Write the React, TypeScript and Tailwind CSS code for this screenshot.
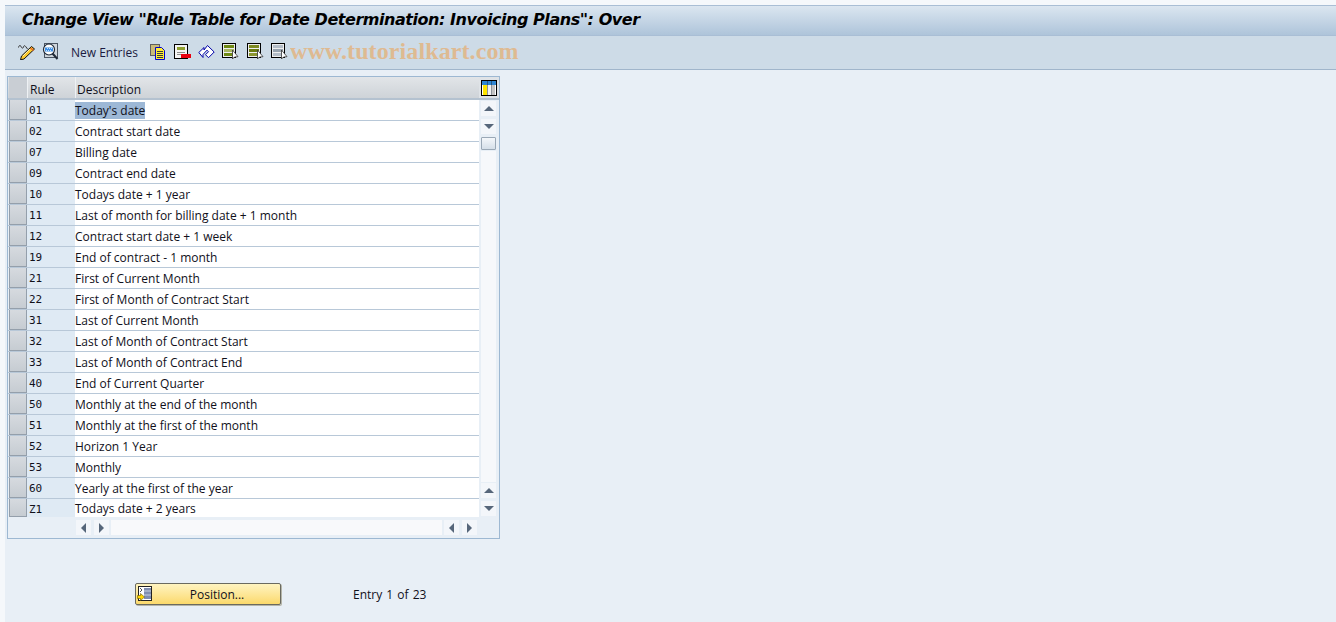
const rows = [
  ["01", "Today's date"],
  ["02", "Contract start date"],
  ["07", "Billing date"],
  ["09", "Contract end date"],
  ["10", "Todays date + 1 year"],
  ["11", "Last of month for billing date + 1 month"],
  ["12", "Contract start date + 1 week"],
  ["19", "End of contract - 1 month"],
  ["21", "First of Current Month"],
  ["22", "First of Month of Contract Start"],
  ["31", "Last of Current Month"],
  ["32", "Last of Month of Contract Start"],
  ["33", "Last of Month of Contract End"],
  ["40", "End of Current Quarter"],
  ["50", "Monthly at the end of the month"],
  ["51", "Monthly at the first of the month"],
  ["52", "Horizon 1 Year"],
  ["53", "Monthly"],
  ["60", "Yearly at the first of the year"],
  ["Z1", "Todays date + 2 years"],
];

function PencilIcon() {
  return (
    <svg width="17" height="16" viewBox="0 0 17 16">
      <path d="M0.5 3.5C1 1 2.5 1 3 2.5S5 5 5.5 3 7 1.5 8 3l1.5 2" fill="none" stroke="#333" strokeWidth="1" />
      <path d="M13.5 2.5l3 2.5L6 15l-3.5 .8L3.5 12z" fill="#fbc92f" stroke="#111" strokeWidth="1" />
      <path d="M12.5 4l3 2.5" stroke="#e8672a" strokeWidth="1.5" />
      <path d="M5 12l7-7" stroke="#fff3b0" strokeWidth="1" />
    </svg>
  );
}

function GlassesIcon() {
  return (
    <svg width="17" height="17" viewBox="0 0 17 17">
      <rect x="2.5" y="0.5" width="13" height="14" fill="#cfd6dc" stroke="#4b5563" />
      <circle cx="7" cy="6.5" r="5.5" fill="#fff" stroke="#1f2937" strokeWidth="1.2" />
      <path d="M3 4.5h8v4H3z" fill="#3d8fe6" />
      <path d="M5 5.5h1M7 5.5h1M9 5.5h1M4 7.5h1M6 7.5h1M8 7.5h1" stroke="#bfe0fb" />
      <path d="M10.5 10.5l5 5.5" stroke="#1f2937" strokeWidth="2" />
    </svg>
  );
}

function CopyIcon() {
  return (
    <svg width="16" height="16" viewBox="0 0 16 16">
      <rect x="0.5" y="0.5" width="9" height="11" fill="#c9bb78" stroke="#5f5f5f" />
      <path d="M5.5 3.5h6l3 3v9h-9z" fill="#ffee33" stroke="#0000d0" />
      <path d="M7 7.5h6M7 9.5h6M7 11.5h6M7 13.5h6" stroke="#3a3a3a" />
    </svg>
  );
}

function DeleteIcon() {
  return (
    <svg width="17" height="16" viewBox="0 0 17 16">
      <rect x="0.5" y="0.5" width="13" height="14" fill="#f4f4f4" stroke="#000" />
      <rect x="3" y="3" width="8" height="3" fill="#8fa030" />
      <rect x="3" y="8" width="8" height="1" fill="#8d8d8d" />
      <rect x="3" y="10" width="4" height="1" fill="#8d8d8d" />
      <rect x="7" y="10" width="10" height="4" fill="#e8000f" />
    </svg>
  );
}

function UndoIcon() {
  return (
    <svg width="17" height="15" viewBox="0 0 17 15">
      <path d="M0.8 8.5L6 3.5v2.5l3.5-4.5 6.7 6.5-5.7 5.7-3-3 3-3-1.5-1.5L5 10.5v3z" fill="#fff" stroke="#0000a8" strokeWidth="1" />
    </svg>
  );
}

function SelectIcon({ top, mid, bottom }: { top: string; mid: string; bottom: string }) {
  return (
    <svg width="17" height="17" viewBox="0 0 17 17">
      <rect x="0.5" y="0.5" width="13" height="14" fill="#efefef" stroke="#000" />
      <rect x="2" y="2" width="10" height="3" fill={top} />
      <rect x="2" y="6" width="10" height="3" fill={mid} />
      <rect x="2" y="10" width="10" height="3" fill={bottom} />
      <path d="M10.5 7v9l2-2 3.5-.3z" fill="#fff" stroke="#333" strokeWidth="0.8" />
    </svg>
  );
}

function ColumnsIcon() {
  return (
    <svg width="16" height="16" viewBox="0 0 16 16">
      <rect x="0.5" y="0.5" width="15" height="15" fill="#fff" stroke="#000" />
      <rect x="1" y="1" width="14" height="4" fill="#2f86d2" />
      <rect x="2" y="5" width="4" height="10" fill="#ffe600" />
      <rect x="7" y="5" width="3" height="10" fill="#f2f2f2" />
      <rect x="11" y="5" width="3" height="10" fill="#c4c4c4" />
      <path d="M6.5 1v14M10.5 1v14" stroke="#1f2937" strokeWidth="0.5" />
    </svg>
  );
}

function PositionIcon() {
  return (
    <svg width="16" height="16" viewBox="0 0 16 16">
      <rect x="1.5" y="0.5" width="13" height="14" fill="#fff" stroke="#222" />
      <rect x="7" y="2" width="7" height="11" fill="#7f8db0" />
      <path d="M7 5h7M7 9h7" stroke="#c8d0e0" />
      <path d="M3 2l2 2-2 2" fill="none" stroke="#555" />
      <path d="M0.5 9.5h3V7.5l4 3.5-4 3.5v-2h-3z" fill="#ffd500" stroke="#665500" strokeWidth="0.6" />
    </svg>
  );
}

function ScrollBtn({ dir }: { dir: "up" | "down" | "left" | "right" }) {
  const points = {
    up: "0,6 5,1 10,6",
    down: "0,1 10,1 5,6",
    left: "6,0 6,10 1,5",
    right: "1,0 1,10 6,5",
  }[dir];
  const vertical = dir === "up" || dir === "down";
  return (
    <div className="flex h-[15px] w-[15px] items-center justify-center bg-[#f3f6fa]">
      <svg width={vertical ? 10 : 7} height={vertical ? 7 : 10}>
        <polygon points={points} fill="#56667a" />
      </svg>
    </div>
  );
}

export default function App() {
  return (
    <div className="relative flex h-[622px] w-[1336px] flex-col overflow-hidden bg-[#f5f8fb] pl-[5px] pt-[5px] font-['Open_Sans','Noto_Sans',sans-serif] text-[12px] text-[#10101a]">
      <div className="flex h-[31px] items-center border-y border-[#a9bed5] bg-gradient-to-b from-[#dbe6f0] to-[#aec4da] pb-[2px] pl-[17px]">
        <span className="font-['DejaVu_Sans',sans-serif] text-[16px] font-bold italic tracking-[-0.46px] text-black">
          Change View "Rule Table for Date Determination: Invoicing Plans": Over
        </span>
      </div>

      <div className="flex h-[34px] items-center border-b border-[#a0b5cb] bg-[#cddbe7] pb-[2px] pl-[13px]">
        <PencilIcon />
        <div className="ml-[7px]"><GlassesIcon /></div>
        <span className="ml-[12px] pt-[3px] text-[#1a1a40]">New Entries</span>
        <div className="ml-[12px]"><CopyIcon /></div>
        <div className="ml-[8px]"><DeleteIcon /></div>
        <div className="ml-[7px]"><UndoIcon /></div>
        <div className="ml-[7px]"><SelectIcon top="#6f8a14" mid="#a8b860" bottom="#6f8a14" /></div>
        <div className="ml-[8px]"><SelectIcon top="#7d8a20" mid="#6a7a10" bottom="#8b9630" /></div>
        <div className="ml-[7px]"><SelectIcon top="#b5bec8" mid="#98a4b0" bottom="#b5bec8" /></div>
      </div>

      <div className="flex-1 bg-[#e8eff6] pl-[2px] pt-[6px]">
        <div className="flex h-[463px] w-[493px] flex-col border border-[#9db8d2] bg-[#e8eff6]">
          <div className="flex h-[23px] border-b-2 border-[#b4c2d0] bg-gradient-to-b from-[#e2e5e8] to-[#ced3d8]">
            <div className="ml-[1px] w-[18px] bg-[#c9ced4]" />
            <div className="w-[48px] border-l border-[#eef1f4] pl-[2px] pt-[2px] leading-[22px]">Rule</div>
            <div className="flex-1 border-l border-[#eef1f4] pl-[1px] pt-[2px] leading-[22px]">Description</div>
            <div className="flex w-[20px] items-center justify-center bg-[#dfe3e7]">
              <ColumnsIcon />
            </div>
          </div>

          <div className="flex flex-1">
            <div className="flex-1">
              {rows.map(([rule, text], i) => (
                <div
                  key={rule}
                  className={`flex ${i === rows.length - 1 ? "h-[18px]" : "h-[21px] border-b border-[#b8c8d8]"}`}
                >
                  <div className="ml-[1px] h-full w-[18px] border-x border-b border-[#949fab] bg-gradient-to-b from-[#d6dadf] to-[#c6ccd2]" />
                  <div className="w-[48px] bg-[#dfeaf4] pl-[2px] font-['DejaVu_Sans_Mono',monospace] text-[11px] leading-[21px]">
                    {rule}
                  </div>
                  <div className={`flex-1 bg-white ${i === rows.length - 1 ? "leading-[20px]" : "leading-[21px]"}`}>
                    <span className={i === 0 ? "bg-[#9db8d6]" : ""}>{text}</span>
                  </div>
                </div>
              ))}
              <div className="flex h-[21px] items-start pl-[68px] pt-[3px]">
                <ScrollBtn dir="left" />
                <div className="ml-[3px]"><ScrollBtn dir="right" /></div>
                <div className="ml-[2px] h-[15px] w-[331px] bg-[#f8f9fb]" />
                <div className="ml-[2px]"><ScrollBtn dir="left" /></div>
                <div className="ml-[3px]"><ScrollBtn dir="right" /></div>
              </div>
            </div>

            <div className="flex w-[20px] flex-col items-center pr-[1px] pt-[1px]">
              <ScrollBtn dir="up" />
              <div className="mt-[3px]"><ScrollBtn dir="down" /></div>
              <div className="mt-[3px] h-[13px] w-[15px] rounded-[1px] border border-[#9aa8b6] bg-gradient-to-b from-[#f4f7fa] to-[#d5dfe9]" />
              <div className="mt-[1px] h-[331px] w-[15px] bg-[#f6f8fb]" />
              <div className="mt-[1px]"><ScrollBtn dir="up" /></div>
              <div className="mt-[3px]"><ScrollBtn dir="down" /></div>
            </div>
          </div>
        </div>

        <div className="mt-[44px] flex items-center pl-[128px]">
          <button className="relative flex h-[22px] w-[146px] items-center justify-center rounded-[2px] border border-[#6a6a60] bg-gradient-to-b from-[#fff4c0] to-[#fbd96a] pl-[18px] pt-[2px] text-[#10101a] shadow-[1px_1px_0_#b5b5a8]">
            <span className="absolute left-[1px] top-[2px]"><PositionIcon /></span>
            Position...
          </button>
          <span className="ml-[72px] pt-[2px] [word-spacing:1px]">Entry 1 of 23</span>
        </div>
      </div>

      <div className="absolute left-[290px] top-[33px] font-['Liberation_Serif',serif] text-[24px] font-bold tracking-[0.1px] text-[#f09a3e] opacity-50">
        www.tutorialkart.com
      </div>
    </div>
  );
}
